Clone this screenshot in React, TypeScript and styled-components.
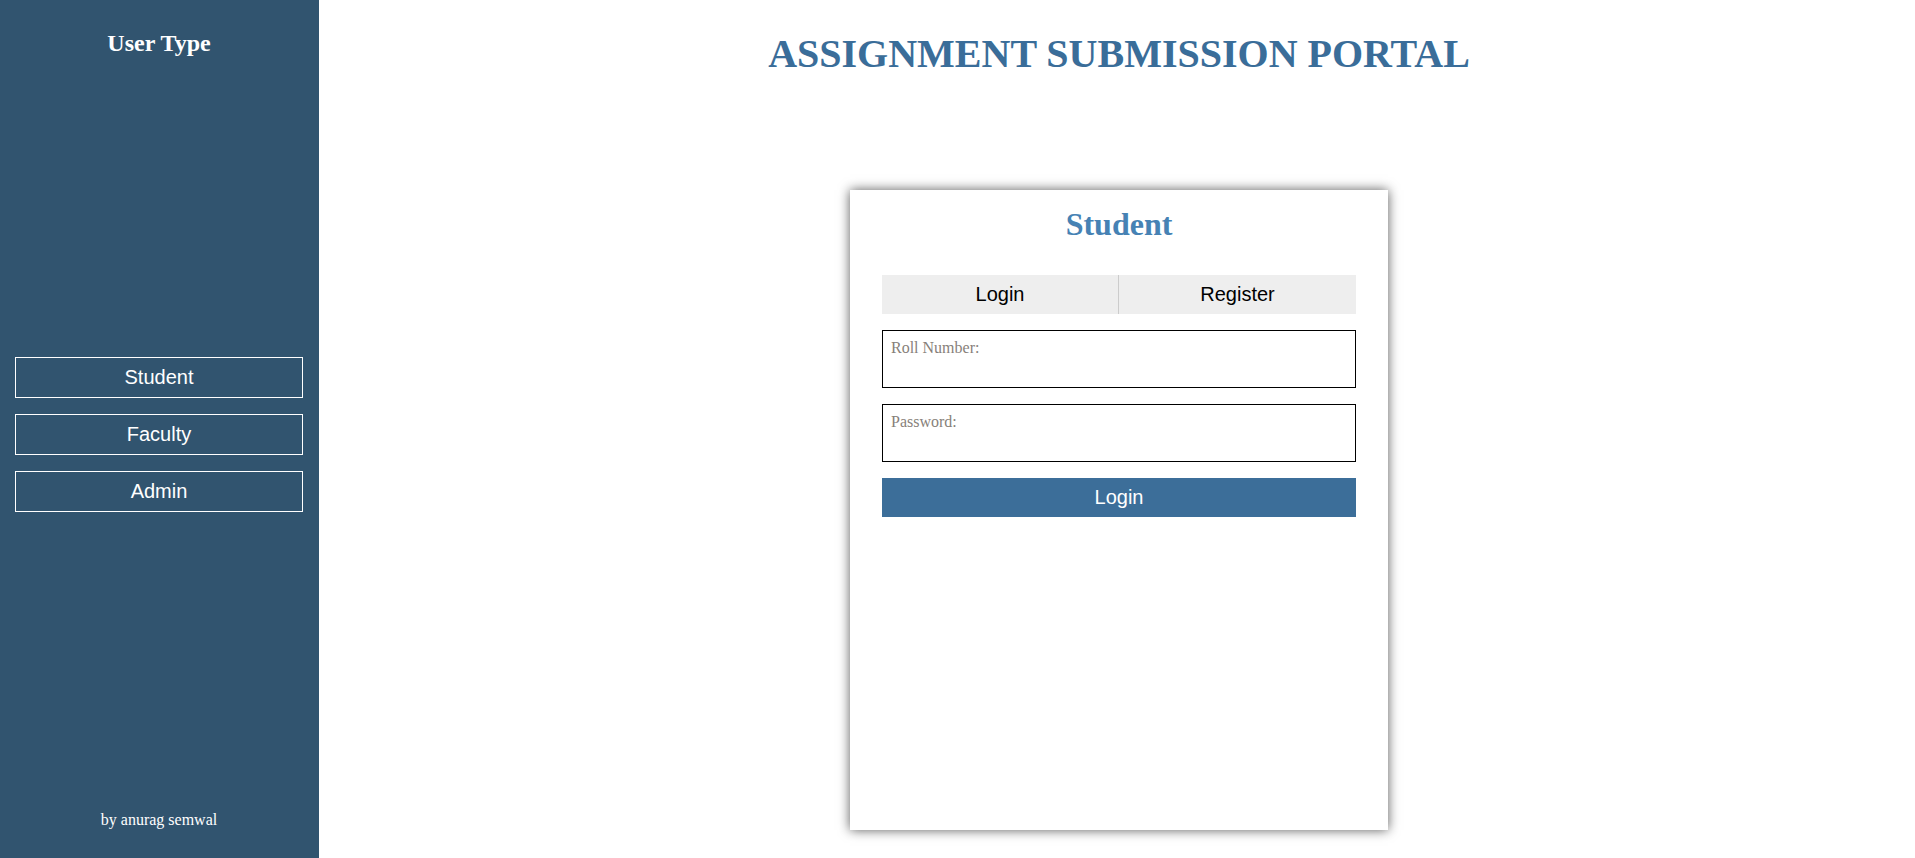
import React, { useState } from "react";
import styled, { createGlobalStyle } from "styled-components";

const GlobalStyle = createGlobalStyle`
  html, body {
    margin: 0;
    padding: 0;
    background: #ffffff;
  }
  body {
    font-family: "Liberation Serif", "Times New Roman", serif;
  }
  * { box-sizing: border-box; }
`;

const Page = styled.div`
  display: flex;
  width: 100%;
  height: 858px;
  overflow: hidden;
`;

const Sidebar = styled.aside`
  width: 319px;
  flex: 0 0 319px;
  height: 100%;
  background: #31546f;
  display: flex;
  flex-direction: column;
  padding: 29px 16px 29px 15px;
  color: #ffffff;
`;

const SideTitle = styled.h2`
  margin: 0;
  font-family: "Liberation Serif", "Times New Roman", serif;
  font-weight: bold;
  font-size: 24px;
  line-height: 28px;
  text-align: center;
  color: #ffffff;
`;

const TypeList = styled.nav`
  display: flex;
  flex-direction: column;
  gap: 16px;
  margin-top: 300px;
`;

const TypeButton = styled.button<{ $active?: boolean }>`
  height: 41px;
  width: 288px;
  background: transparent;
  border: 1px solid #ffffff;
  color: #ffffff;
  font-family: "Liberation Sans", Arial, sans-serif;
  font-size: 20px;
  display: flex;
  align-items: center;
  justify-content: center;
  padding: 0;
  cursor: pointer;
`;

const Footer = styled.div`
  margin-top: auto;
  font-family: "Liberation Serif", "Times New Roman", serif;
  font-size: 16px;
  line-height: 18px;
  text-align: center;
  color: #ffffff;
`;

const Main = styled.main`
  flex: 1;
  display: flex;
  flex-direction: column;
  align-items: center;
  padding-top: 31px;
  padding-left: 4px;
`;

const PortalTitle = styled.h1`
  margin: 0;
  font-family: "Liberation Serif", "Times New Roman", serif;
  font-weight: bold;
  font-size: 40px;
  line-height: 46px;
  color: #3a6d99;
  text-align: center;
`;

const Card = styled.section`
  margin-top: 113px;
  width: 538px;
  height: 640px;
  background: #ffffff;
  box-shadow: 0 0 11px rgba(0, 0, 0, 0.65);
  padding: 16px 32px 0 32px;
  display: flex;
  flex-direction: column;
`;

const CardTitle = styled.h1`
  margin: 0;
  font-family: "Liberation Serif", "Times New Roman", serif;
  font-weight: bold;
  font-size: 32px;
  line-height: 36px;
  color: #4682b4;
  text-align: center;
`;

const Tabs = styled.div`
  margin-top: 33px;
  display: grid;
  grid-template-columns: 1fr 1fr;
  height: 39px;
  background: #eeeeee;
`;

const Tab = styled.button<{ $divider?: boolean }>`
  border: none;
  border-right: ${(p) => (p.$divider ? "1px solid #cccccc" : "none")};
  background: #eeeeee;
  font-family: "Liberation Sans", Arial, sans-serif;
  font-size: 20px;
  color: #000000;
  padding: 0;
  cursor: pointer;
`;

const Form = styled.form`
  display: flex;
  flex-direction: column;
  gap: 16px;
  margin-top: 16px;
`;

const Field = styled.textarea`
  display: block;
  width: 100%;
  height: 58px;
  border: 1px solid #000000;
  padding: 8px 8px;
  resize: none;
  overflow: hidden;
  font-family: "Liberation Serif", "Times New Roman", serif;
  font-size: 16px;
  line-height: 18px;
  color: #000000;
  outline: none;
  &::placeholder {
    color: #877f7a;
    opacity: 1;
  }
`;

const Submit = styled.button`
  height: 39px;
  width: 100%;
  border: none;
  background: #3c6e99;
  color: #ffffff;
  font-family: "Liberation Sans", Arial, sans-serif;
  font-size: 20px;
  padding: 0;
  cursor: pointer;
`;

export default function App() {
  const [tab, setTab] = useState<"login" | "register">("login");
  return (
    <>
      <GlobalStyle />
      <Page>
        <Sidebar>
          <SideTitle>User Type</SideTitle>
          <TypeList>
            <TypeButton $active>Student</TypeButton>
            <TypeButton>Faculty</TypeButton>
            <TypeButton>Admin</TypeButton>
          </TypeList>
          <Footer>by anurag semwal</Footer>
        </Sidebar>
        <Main>
          <PortalTitle>ASSIGNMENT SUBMISSION PORTAL</PortalTitle>
          <Card>
            <CardTitle>Student</CardTitle>
            <Tabs>
              <Tab $divider onClick={() => setTab("login")}>Login</Tab>
              <Tab onClick={() => setTab("register")}>Register</Tab>
            </Tabs>
            <Form onSubmit={(e) => e.preventDefault()}>
              <Field placeholder="Roll Number:" />
              <Field placeholder="Password:" />
              <Submit type="submit">{tab === "login" ? "Login" : "Register"}</Submit>
            </Form>
          </Card>
        </Main>
      </Page>
    </>
  );
}
